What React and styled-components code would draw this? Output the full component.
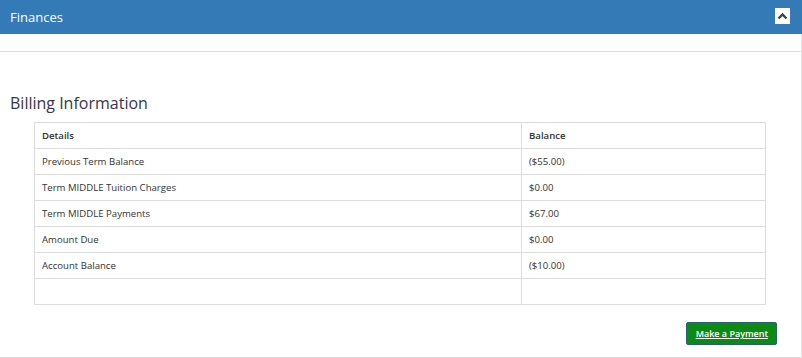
import styled, { createGlobalStyle } from "styled-components";

const GlobalStyle = createGlobalStyle`
  body {
    margin: 0;
    background: #fff;
    font-family: "Open Sans", "Liberation Sans", sans-serif;
  }
`;

const rows = [
  { label: "Previous Term Balance", value: "($55.00)" },
  { label: "Term MIDDLE Tuition Charges", value: "$0.00" },
  { label: "Term MIDDLE Payments", value: "$67.00" },
  { label: "Amount Due", value: "$0.00" },
  { label: "Account Balance", value: "($10.00)" },
  { label: "", value: "" },
];

export default function App() {
  return (
    <Page>
      <GlobalStyle />
      <Header>
        <HeaderTitle>Finances</HeaderTitle>
        <CollapseButton aria-label="collapse">
          <svg width="11" height="8" viewBox="0 0 11 8">
            <path d="M1.5 6.5 L5.5 2.5 L9.5 6.5" fill="none" stroke="#444" strokeWidth="2.4" />
          </svg>
        </CollapseButton>
      </Header>
      <Spacer />
      <Body>
        <Title>Billing Information</Title>
        <Table>
          <thead>
            <tr>
              <HeadCell $first>Details</HeadCell>
              <HeadCell>Balance</HeadCell>
            </tr>
          </thead>
          <tbody>
            {rows.map((r, i) => (
              <tr key={i}>
                <Cell $first>{r.label}</Cell>
                <Cell>{r.value}</Cell>
              </tr>
            ))}
          </tbody>
        </Table>
        <Actions>
          <PayButton href="#">Make a Payment</PayButton>
        </Actions>
      </Body>
    </Page>
  );
}

const Page = styled.div`
  width: 802px;
  border-right: 1px solid #e4e4e4;
  box-sizing: border-box;
`;

const Header = styled.div`
  display: flex;
  align-items: center;
  justify-content: space-between;
  height: 34px;
  background: #337ab7;
  padding: 0 12px 0 10px;
  margin-right: -1px;
`;

const HeaderTitle = styled.span`
  color: #fff;
  font-size: 13px;
  margin-top: -1px;
`;

const CollapseButton = styled.span`
  display: flex;
  align-items: center;
  justify-content: center;
  width: 15px;
  height: 16px;
  margin-top: -3px;
  background: #fff;
`;

const Spacer = styled.div`
  height: 17px;
  border-bottom: 1px solid #dcdcdc;
`;

const Body = styled.div`
  padding: 38px 0 12px 0;
  border-bottom: 1px solid #dcdcdc;
`;

const Title = styled.h2`
  margin: 0 0 6px 10px;
  font-size: 16px;
  font-weight: 400;
  color: #3a3546;
  line-height: 26px;
`;

const Table = styled.table`
  margin-left: 34px;
  width: 732px;
  border-collapse: collapse;
  border: 1px solid #dcdcdc;
`;

const Cell = styled.td`
  height: 25px;
  padding: 0 7px;
  border: 1px solid #dcdcdc;
  font-size: 9.6px;
  color: #333;
  width: ${(p) => (p.$first ? "472px" : "auto")};
`;

const HeadCell = styled(Cell).attrs({ as: "th" })`
  text-align: left;
  font-weight: 600;
`;

const Actions = styled.div`
  display: flex;
  justify-content: flex-end;
  padding-right: 24px;
  margin-top: 17px;
`;

const PayButton = styled.a`
  display: inline-flex;
  align-items: center;
  height: 23px;
  box-sizing: border-box;
  padding: 0 8px 0 9px;
  background: #0b8a14;
  border: 1px solid #2b5f7a;
  border-radius: 2px;
  color: #fff;
  font-size: 9px;
  font-weight: 600;
  text-decoration: underline;
`;
